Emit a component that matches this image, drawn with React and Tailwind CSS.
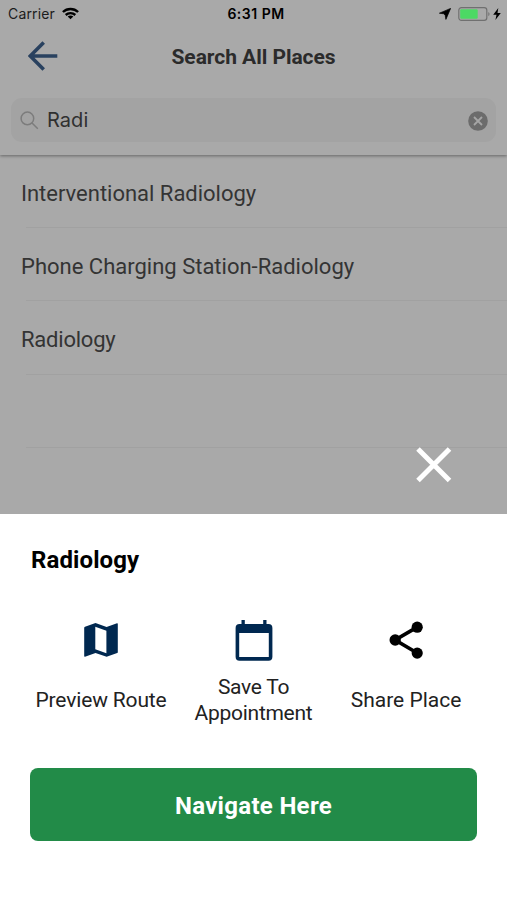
import React, { useState } from 'react';

const places = [
  { name: 'Interventional Radiology', tracking: 'tracking-[-0.01px]' },
  { name: 'Phone Charging Station-Radiology', tracking: 'tracking-normal' },
  { name: 'Radiology', tracking: 'tracking-[-0.22px]' },
];

const StatusBar = () => (
  <div className="grid grid-cols-3 items-center h-[27px] mb-px pl-2 pr-[5px] font-['Inter',sans-serif] text-black">
    <div className="flex items-center gap-[7px] text-[14px] tracking-[0.15px] text-[#1c1c1c]">
      <span>Carrier</span>
      <svg width="17" height="13" viewBox="0 0 17 13" fill="none" stroke="#000" strokeWidth="2.4">
        <path d="M0.9 5C5.2 0.9 11.8 0.9 16.1 5" />
        <path d="M3.7 8C6.4 5.5 10.6 5.5 13.3 8" />
        <path d="M8.5 12.3L5.7 9.5C7.3 8.1 9.7 8.1 11.3 9.5Z" fill="#000" stroke="none" />
      </svg>
    </div>
    <span className="text-center text-[14px] font-semibold tracking-[0.5px] pl-[2px] whitespace-nowrap">6:31 PM</span>
    <div className="flex items-center justify-end">
      <svg width="12" height="12" viewBox="0 0 12 12" className="mr-[7px]">
        <path d="M11.6 0.4L6.9 11.4L6.2 7.2L4.8 5.8L0.4 5.2Z" stroke="#000" strokeWidth="0.7" strokeLinejoin="round" />
      </svg>
      <svg width="33" height="14" viewBox="0 0 33 14" className="mr-[2px]">
        <rect x="0.8" y="0.6" width="28" height="12.8" rx="2.6" fill="none" stroke="#707070" strokeWidth="1.2" />
        <rect x="2.2" y="2.2" width="17.5" height="9.6" rx="1.2" fill="#4cd964" />
        <path d="M30.3 5C32 5.8 32 8.4 30.3 9.2Z" fill="#707070" />
      </svg>
      <svg width="8" height="12" viewBox="0 0 8 12" className="mr-px">
        <path d="M5.3 0L0.2 6.8H3.5L2.4 12L7.8 4.9H4.5Z" />
      </svg>
    </div>
  </div>
);

const Header = ({ query, onChange }) => (
  <header className="h-[155px] bg-[#a9a9a9] relative shadow-[0_1px_3px_rgba(0,0,0,0.4)]">
    <StatusBar />
    <div className="grid grid-cols-[80px_1fr_80px] items-center h-14 mb-[14px]">
      <button className="pl-7">
        <svg width="30" height="30" viewBox="0 0 30 30" fill="none" stroke="#29415f" strokeWidth="3.6">
          <path d="M29.3 15H2.5M15.7 1.5L2.2 15L15.7 28.5" />
        </svg>
      </button>
      <h1 className="text-center text-[21px] leading-7 font-bold tracking-[-0.04px] text-[#2b2b2b] whitespace-nowrap pt-[2px]">Search All Places</h1>
    </div>
    <div className="flex items-center h-11 mx-[11px] pl-[9px] pr-2 rounded-[11px] bg-[#a3a3a3]">
      <svg width="19" height="19" viewBox="0 0 19 19" fill="none" stroke="#7c7c7c" strokeWidth="1.5">
        <circle cx="7.4" cy="7.4" r="6.3" />
        <path d="M12 12L17.8 17.8" />
      </svg>
      <input
        value={query}
        onChange={(e) => onChange(e.target.value)}
        className="flex-1 min-w-0 ml-2 bg-transparent outline-none font-['Inter',sans-serif] text-[20px] tracking-[0.05px] text-[#303030]"
      />
      <button onClick={() => onChange('')} className="pt-px">
        <svg width="20" height="20" viewBox="0 0 20 20">
          <circle cx="10" cy="10" r="9.8" fill="#6c6c6c" />
          <path d="M6 6L14 14M14 6L6 14" stroke="#a6a6a6" strokeWidth="1.8" />
        </svg>
      </button>
    </div>
  </header>
);

const Action = ({ icon, children }) => (
  <button className="flex flex-col items-center text-[21px] leading-[26px] text-[#222]">
    <span className="h-12 flex items-center">{icon}</span>
    <span className="h-[72px] flex items-center text-center">{children}</span>
  </button>
);

function App() {
  const [query, setQuery] = useState('Radi');

  return (
    <div className="w-[507px] h-[900px] flex flex-col overflow-hidden bg-[#a9a9a9] font-['Roboto',sans-serif]">
      <Header query={query} onChange={setQuery} />

      <main className="relative h-[359px] shrink-0 overflow-hidden">
        <ul className="text-[22px] text-[#343434]">
          {places.map(({ name, tracking }) => (
            <li key={name} className="h-[73.2px]">
              <div className="flex items-center h-full pl-[21px] pt-[3px]">
                <span className={tracking}>{name}</span>
              </div>
              <div className="ml-[26px] -mt-px h-px bg-[#a1a1a1]" />
            </li>
          ))}
          <li className="h-[73.3px] flex items-end">
            <div className="ml-[26px] w-full h-px bg-[#a1a1a1]" />
          </li>
        </ul>
        <button className="absolute left-[416px] top-[292px]">
          <svg width="36" height="36" viewBox="0 0 36 36" stroke="#fff" strokeWidth="5">
            <path d="M2 2L33.5 33.5M33.5 2L2 33.5" />
          </svg>
        </button>
      </main>

      <section className="flex-1 bg-white px-[30px] pt-[30px]">
        <h2 className="text-[24px] leading-8 font-bold tracking-[0.1px] text-black pl-px">Radiology</h2>
        <div className="grid grid-cols-[142px_163px_142px] mt-10">
          <Action
            icon={
              <svg width="34" height="34" viewBox="0 0 34 34" fill="#002850">
                <path fillRule="evenodd" d="M1 3.8L11.5 0L22.6 4L33 0.2Q33.8 0 33.8 0.9V29.3Q33.8 29.9 33.2 30.1L22.6 33.8L11.5 29.9L1 33.7Q0.2 33.9 0.2 33V4.8Q0.2 4.1 1 3.8ZM11.3 3.8V26.3L22.4 30.2V7.7Z" />
              </svg>
            }
          >
            <span className="tracking-[-0.16px] whitespace-nowrap">Preview Route</span>
          </Action>
          <Action
            icon={
              <svg width="38" height="41" viewBox="0 0 38 41" fill="#002850">
                <path fillRule="evenodd" d="M6.5 0H9.8V4H28.2V0H31.5V4H33.5Q37.4 4 37.4 8V36.8Q37.4 40.7 33.5 40.7H4.5Q0.6 40.7 0.6 36.8V8Q0.6 4 4.5 4H6.5ZM4.2 13V36.9H33.8V13Z" />
              </svg>
            }
          >
            <span className="tracking-[-0.28px]">Save To<br />Appointment</span>
          </Action>
          <Action
            icon={
              <svg width="34" height="38" viewBox="0 0 34 38" stroke="#000">
                <path d="M28.2 6.2L6.2 19L28.2 32" fill="none" strokeWidth="3.7" />
                <g stroke="none">
                  <circle cx="28.2" cy="6.2" r="5.6" />
                  <circle cx="6.2" cy="19" r="5.7" />
                  <circle cx="28.2" cy="32.1" r="5.6" />
                </g>
              </svg>
            }
          >
            <span className="whitespace-nowrap">Share Place</span>
          </Action>
        </div>
        <button className="w-full h-[73px] mt-8 pt-[3px] rounded-lg bg-[#228b48] text-white text-[24px] font-bold tracking-[0.3px]">
          Navigate Here
        </button>
      </section>
    </div>
  );
}

export default App;
